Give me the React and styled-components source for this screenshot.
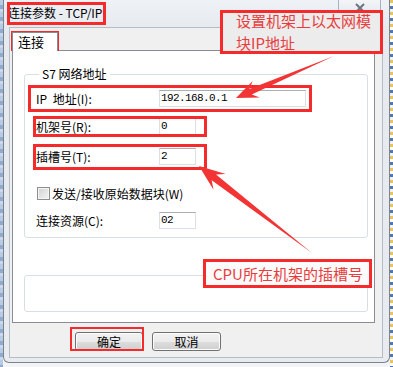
import React from 'react';
import styled, { createGlobalStyle } from 'styled-components';

const BORDER_RED = '#f52b2b';
const TEXT_RED = '#e83d3d';

const GlobalStyle = createGlobalStyle`
  html, body {
    margin: 0;
    padding: 0;
    background: #f4f5f7;
  }
  body {
    font-family: "Noto Sans CJK SC", "Liberation Sans", sans-serif;
  }
`;

// arrow drawn as a tapering shaft with a swept-back head
const arrowPoints = (tx, ty, px, py, h, w1, w2) => {
  const dx = px - tx;
  const dy = py - ty;
  const len = Math.hypot(dx, dy);
  const ux = dx / len;
  const uy = dy / len;
  const nx = -uy;
  const ny = ux;
  const jx = px - ux * h * 0.72;
  const jy = py - uy * h * 0.72;
  const bx = px - ux * h;
  const by = py - uy * h;
  return [
    [tx, ty],
    [jx + nx * w1, jy + ny * w1],
    [bx + nx * w2, by + ny * w2],
    [px, py],
    [bx - nx * w2, by - ny * w2],
    [jx - nx * w1, jy - ny * w1]
  ]
    .map((p) => p.map((v) => v.toFixed(1)).join(','))
    .join(' ');
};

const App = () => {
  return (
    <Page>
      <GlobalStyle />
      <DesktopEdge />
      <Window>
        <TitleBar>
          <Title>连接参数 - TCP/IP</Title>
          <CloseButton>
            <svg width='12' height='10' viewBox='0 0 12 10'>
              <path d='M2 1 L10 9 M10 1 L2 9' stroke='#6b7480' strokeWidth='2' fill='none' />
            </svg>
          </CloseButton>
        </TitleBar>
        <Client>
          <TabStrip>
            <Tab>连接</Tab>
          </TabStrip>
          <TabPanel>
            <GroupBox>
              <Legend>S7 网络地址</Legend>
              <Row>
                <Label>IP 地址(I):</Label>
                <Field $w={147}>192.168.0.1</Field>
              </Row>
              <Row $mt={10}>
                <Label>机架号(R):</Label>
                <Field $w={37}>0</Field>
              </Row>
              <Row $mt={12}>
                <Label>插槽号(T):</Label>
                <Field $w={37}>2</Field>
              </Row>
              <Row $mt={19}>
                <CheckBox />
                <CheckLabel>发送/接收原始数据块(W)</CheckLabel>
              </Row>
              <Row $mt={9}>
                <Label>连接资源(C):</Label>
                <Field $w={37}>02</Field>
              </Row>
            </GroupBox>
            <EmptyGroup />
          </TabPanel>
          <ButtonRow>
            <Button $w={68}>确定</Button>
            <Button $w={69}>取消</Button>
          </ButtonRow>
        </Client>
      </Window>
      <BackWindowEdge />

      <Mark $x={7} $y={2} $w={99} $h={23} />
      <Mark $x={11} $y={31} $w={48} $h={20} />
      <Mark $x={28} $y={85} $w={284} $h={27} />
      <Mark $x={33} $y={116} $w={174} $h={21} />
      <Mark $x={33} $y={144} $w={174} $h={26} />
      <Mark $x={70} $y={327} $w={74} $h={24} $thin />

      <Arrows width='393' height='367' viewBox='0 0 393 367'>
        <polygon points={arrowPoints(334, 56, 236, 98, 22, 3, 9)} fill='#f23434' />
        <polygon points={arrowPoints(312, 253, 199, 166, 26, 3.5, 10)} fill='#f23434' />
      </Arrows>

      <Callout $x={220} $y={10} $w={163} $h={44} $pad={13} $bg='#ececec'>
        <span>设置机架上以太网模</span>
        <span>块IP地址</span>
      </Callout>
      <Callout $x={203} $y={259} $w={169} $h={29} $pad={7} $bg='#fbfbfb'>
        <span>CPU所在机架的插槽号</span>
      </Callout>
    </Page>
  );
};

const Page = styled.div`
  position: relative;
  width: 393px;
  height: 367px;
  overflow: hidden;
  display: flex;
  align-items: flex-start;
  background: #f3f4f6;
`;

const DesktopEdge = styled.div`
  width: 3px;
  height: 100%;
  background: repeating-linear-gradient(
    180deg,
    #b9cbe4 0 5px,
    #91abd0 5px 9px,
    #cbd8eb 9px 12px
  );
`;

const BackWindowEdge = styled.div`
  width: 3px;
  height: 100%;
  background: repeating-linear-gradient(
    180deg,
    #e9c35e 0 3px,
    #ffffff 3px 6px,
    #5378b0 6px 9px,
    #f2f2f2 9px 12px
  );
`;

const Window = styled.div`
  width: 387px;
  height: 363px;
  box-sizing: border-box;
  border: 1px solid #7b838d;
  border-top: none;
  border-radius: 0 0 6px 6px;
  background: linear-gradient(180deg, #eef1f5 0, #e6eaef 30px, #e8ebef 100%);
  display: flex;
  flex-direction: column;
`;

const TitleBar = styled.div`
  height: 27px;
  flex-shrink: 0;
  display: flex;
  align-items: flex-start;
  justify-content: space-between;
  padding-left: 4px;
`;

const Title = styled.div`
  margin-top: 5px;
  font-size: 12px;
  line-height: 16px;
  color: #000;
`;

const CloseButton = styled.div`
  width: 43px;
  height: 16px;
  margin-right: 8px;
  box-sizing: border-box;
  border: 1px solid #a9b1bb;
  border-top: none;
  border-radius: 0 0 4px 4px;
  background: linear-gradient(180deg, #f3f5f8, #e4e8ed);
  display: flex;
  align-items: center;
  justify-content: center;
`;

const Client = styled.div`
  flex: 1;
  margin: 0 6px 4px 5px;
  box-sizing: border-box;
  border: 1px solid #b4bcc6;
  background: #f0f0f0;
  padding: 4px 7px 0 2px;
  display: flex;
  flex-direction: column;
`;

const TabStrip = styled.div`
  height: 18px;
  display: flex;
`;

const Tab = styled.div`
  position: relative;
  z-index: 1;
  width: 46px;
  height: 19px;
  box-sizing: border-box;
  border: 1px solid #898c95;
  border-bottom: none;
  background: #fff;
  padding-left: 5px;
  font-size: 13px;
  line-height: 18px;
  color: #000;
`;

const TabPanel = styled.div`
  height: 273px;
  box-sizing: border-box;
  border: 1px solid #898c95;
  background: #fff;
  padding: 0 6px 0 11px;
  display: flex;
  flex-direction: column;
`;

const GroupBox = styled.fieldset`
  margin: 16px 0 0;
  padding: 8px 0 8px 11px;
  border: 1px solid #d5dfe5;
  border-radius: 3px;
  min-width: 0;
`;

const Legend = styled.legend`
  margin-left: 3px;
  padding: 0 3px;
  font-size: 12px;
  line-height: 14px;
  color: #000;
`;

const Row = styled.div`
  height: 18px;
  margin-top: ${(p) => p.$mt || 0}px;
  display: flex;
  align-items: center;
`;

const Label = styled.div`
  width: 123px;
  font-size: 12px;
  word-spacing: 3px;
  color: #000;
  white-space: nowrap;
`;

const Field = styled.div`
  width: ${(p) => p.$w}px;
  height: 17px;
  box-sizing: border-box;
  border: 1px solid #dbdfe6;
  border-top-color: #abadb3;
  background: #fff;
  padding-left: 1px;
  font-family: "Liberation Mono", monospace;
  font-size: 11px;
  letter-spacing: -0.6px;
  line-height: 15px;
  color: #000;
`;

const CheckBox = styled.div`
  width: 13px;
  height: 13px;
  margin-left: 1px;
  box-sizing: border-box;
  border: 1px solid #8e8f8f;
  background: linear-gradient(135deg, #d2d2d2, #f4f4f4);
  box-shadow: inset 0 0 0 1px #f4f4f4;
`;

const CheckLabel = styled.div`
  margin-left: 2px;
  font-size: 12px;
  color: #000;
  white-space: nowrap;
`;

const EmptyGroup = styled.div`
  height: 37px;
  margin-top: 37px;
  box-sizing: border-box;
  border: 1px solid #d5dfe5;
  border-radius: 3px;
`;

const ButtonRow = styled.div`
  display: flex;
  gap: 9px;
  margin-top: 9px;
  padding-left: 63px;
`;

const Button = styled.div`
  width: ${(p) => p.$w}px;
  height: 19px;
  box-sizing: border-box;
  border: 1px solid #707070;
  border-radius: 3px;
  background: linear-gradient(180deg, #f2f2f2 0, #ebebeb 50%, #dddddd 50%, #cfcfcf 100%);
  box-shadow: inset 0 0 0 1px #fcfcfc;
  display: flex;
  align-items: center;
  justify-content: center;
  font-size: 12px;
  color: #000;
`;

const Mark = styled.div`
  position: absolute;
  left: ${(p) => p.$x}px;
  top: ${(p) => p.$y}px;
  width: ${(p) => p.$w}px;
  height: ${(p) => p.$h}px;
  box-sizing: border-box;
  border: ${(p) => (p.$thin ? 2 : 3)}px solid ${BORDER_RED};
  pointer-events: none;
`;

const Arrows = styled.svg`
  position: absolute;
  left: 0;
  top: 0;
  pointer-events: none;
`;

const Callout = styled.div`
  position: absolute;
  left: ${(p) => p.$x}px;
  top: ${(p) => p.$y}px;
  width: ${(p) => p.$w}px;
  height: ${(p) => p.$h}px;
  box-sizing: border-box;
  border: 3px solid ${BORDER_RED};
  background: ${(p) => p.$bg};
  padding-left: ${(p) => p.$pad}px;
  display: flex;
  flex-direction: column;
  justify-content: center;
  font-size: 15px;
  line-height: 22px;
  color: ${TEXT_RED};
  white-space: nowrap;
`;

export default App;
